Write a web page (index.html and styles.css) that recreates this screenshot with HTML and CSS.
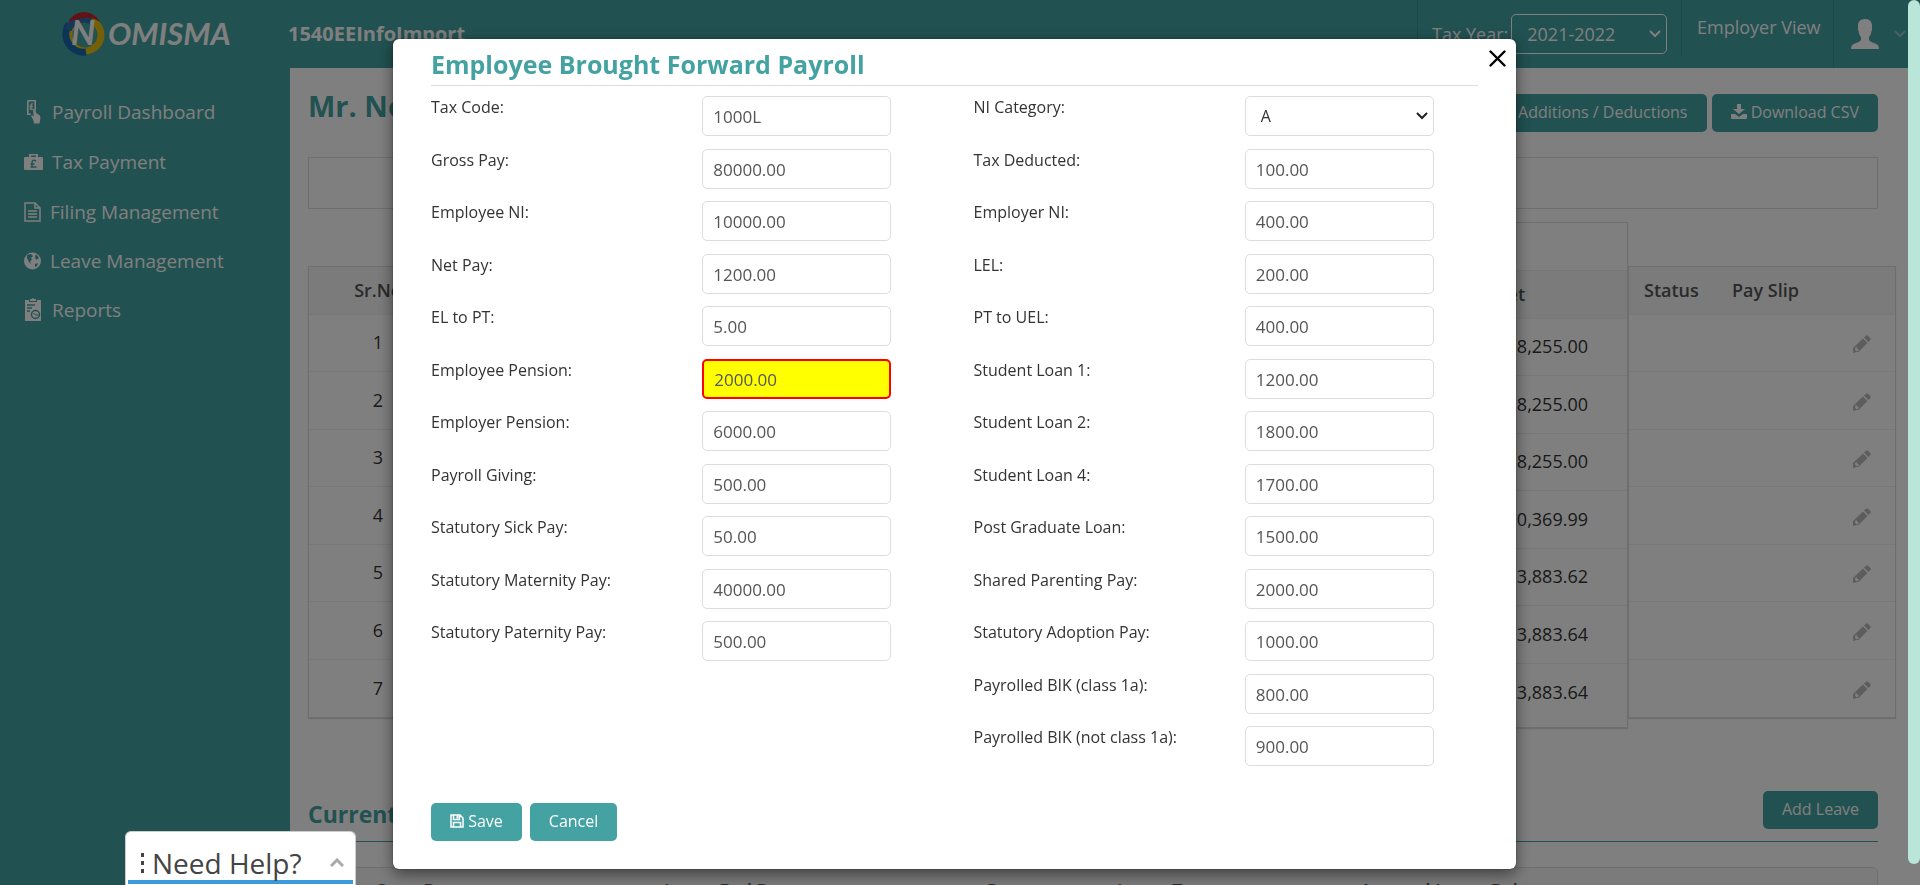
FILE: index.html
```html
<!DOCTYPE html>
<html lang="en">
<head>
<meta charset="utf-8">
<title>Employee Brought Forward Payroll</title>
<link rel="stylesheet" href="styles.css">
</head>
<body>
<svg class="sprite" aria-hidden="true">
  <symbol id="pencil" viewBox="0 0 18 18"><path d="M10 3.500l4.500 4.500L6 16.500 0 18v-5z"/><path d="M11 2.500L13 .7q1-.9 2 0l2.300 2.300q.9 1 0 2L15.500 7z"/><path class="cut" d="M2.200 12.800l1.200-.8 1 1.800 1.600.8-1 1.200-1.500.4-1.500-1.600z"/></symbol>
</svg>
<div class="page">
  <header class="topbar">
    <a class="brand" href="#" aria-label="Nomisma">
      <svg width="180" height="50" viewBox="0 0 180 50">
        <circle cx="23" cy="27" r="16" fill="none" stroke="#e6c010" stroke-width="7"/>
        <path d="M24 44A18 18 0 0 1 7 16" fill="none" stroke="#1a66ac" stroke-width="7"/>
        <path d="M6 22A17 17 0 0 1 29 13" fill="none" stroke="#2f6fae" stroke-width="7"/>
        <path d="M6 14Q12 4 22 4T38 14Q30 9 22 10T6 14z" fill="#c5262c"/>
        <text class="logo-n" x="9" y="37">N</text>
        <text class="logo-rest" x="46" y="37">OMISMA</text>
      </svg>
    </a>
    <strong class="company">1540EEInfoImport</strong>
    <div class="tax-year">
      <label for="year">Tax Year:</label>
      <select id="year"><option>2021-2022</option></select>
    </div>
    <a class="view-link" href="#">Employer View</a>
    <button class="profile" type="button" aria-label="Profile">
      <svg width="28" height="30" viewBox="0 0 28 30"><path fill="#fff" d="M14 0c5 0 7 3 7 7 0 3 .3 4-.5 5-.4 3-1.500 5-2.500 6v3c2 3 8 3 9.500 6l.5 3H0l.5-3C2 24 8 24 10 21v-3c-1-1-2.100-3-2.500-6-.8-1-.5-2-.5-5 0-4 2-7 7-7z"/></svg>
      <svg width="12" height="8" viewBox="0 0 12 8"><path d="M1 1l5 5 5-5" fill="none" stroke="#8fc4c4" stroke-width="2"/></svg>
    </button>
  </header>
  <div class="columns">
    <nav class="sidebar">
      <ul>
        <li><a href="#"><svg width="20" height="24" viewBox="0 0 20 24"><path d="M3.800.8h7.400v10M3.800.8v13.400h3" fill="none" stroke="#fff" stroke-width="1.600"/><path fill="#fff" d="M9 9.500q1.200-1 2 .5l1.200 3 3.800 2.500.5 3-1 5H10l-.5-3L7 16l1-.8 1.800 1z"/><path d="M9 4q-2-.8-2 1.500V9M5.500 6.500h3.300M5.500 9.200h3.500" fill="none" stroke="#fff" stroke-width="1.300"/></svg>Payroll Dashboard</a></li>
        <li><a href="#"><svg width="20" height="18" viewBox="0 0 20 18"><path fill="#fff" fill-rule="evenodd" d="M5 4V1h9v3h4q1 0 1 1v11q0 1-1 1H1q-1 0-1-1V5q0-1 1-1zM7 4h5V2.500H7z"/><path d="M12 8q-4-2-4 1.500V14M6.500 11h4M6.500 14h6" fill="none" stroke="#44a2a2" stroke-width="1.500"/></svg>Tax Payment</a></li>
        <li><a href="#"><svg width="18" height="20" viewBox="0 0 18 20"><path fill="none" stroke="#fff" stroke-width="1.500" d="M1 1h10l5 5v13H1zM11 1v5h5M4 9h9M4 12h9M4 15h9"/></svg>Filing Management</a></li>
        <li><a href="#"><svg width="18" height="18" viewBox="0 0 18 18"><circle cx="8.500" cy="9" r="8.500" fill="#fff"/><path fill="#44a2a2" d="M3 3l4-1 2 2-2 2 1 2-2 1 1 3-2-2-2-4zM12 2l3 4-3 2-1-3zM11 12l3-1-1 3-2 1z"/></svg>Leave Management</a></li>
        <li><a href="#"><svg width="20" height="24" viewBox="0 0 20 24"><path fill="#fff" d="M1 2h4v2h8V2h4v21H1zM6 3V1h2q1-2 2 0h2v2z"/><path d="M3 7h8M3 10h5M3 13h3" stroke="#44a2a2" stroke-width="1.500"/><circle cx="11.500" cy="16.500" r="4" fill="#fff" stroke="#44a2a2" stroke-width="1.500"/><path d="M9.500 15l2 2h3" fill="none" stroke="#44a2a2"/></svg>Reports</a></li>
      </ul>
    </nav>
    <main class="main">
      <div class="title-row">
        <h1>Mr. No</h1>
        <button class="btn" type="button">Additions / Deductions</button>
        <button class="btn" type="button"><svg width="16" height="15" viewBox="0 0 16 15"><path fill="#fff" d="M6 0h4v5h4L8 10 2 5h4zM0 10h4l4 3 4-3h4v4q0 1-1 1H1q-1 0-1-1z"/></svg> Download CSV</button>
      </div>
      <div class="panel"></div>
      <div class="tables">
        <table class="grid serial">
          <thead><tr><th>Sr.No</th></tr></thead>
          <tbody><tr><td>1</td></tr><tr><td>2</td></tr><tr><td>3</td></tr><tr><td>4</td></tr><tr><td>5</td></tr><tr><td>6</td></tr><tr><td>7</td></tr></tbody>
        </table>
        <table class="grid amounts">
          <thead><tr class="group"><td></td></tr><tr><th>Net</th></tr></thead>
          <tbody><tr><td>8,255.00</td></tr><tr><td>8,255.00</td></tr><tr><td>8,255.00</td></tr><tr><td>0,369.99</td></tr><tr><td>3,883.62</td></tr><tr><td>3,883.64</td></tr><tr><td>3,883.64</td></tr></tbody>
        </table>
        <table class="grid status">
          <thead><tr><th class="c-status">Status</th><th class="c-slip">Pay Slip</th><th></th></tr></thead>
          <tbody>
            <tr><td></td><td></td><td><svg class="pencil"><use href="#pencil"/></svg></td></tr>
            <tr><td></td><td></td><td><svg class="pencil"><use href="#pencil"/></svg></td></tr>
            <tr><td></td><td></td><td><svg class="pencil"><use href="#pencil"/></svg></td></tr>
            <tr><td></td><td></td><td><svg class="pencil"><use href="#pencil"/></svg></td></tr>
            <tr><td></td><td></td><td><svg class="pencil"><use href="#pencil"/></svg></td></tr>
            <tr><td></td><td></td><td><svg class="pencil"><use href="#pencil"/></svg></td></tr>
            <tr><td></td><td></td><td><svg class="pencil"><use href="#pencil"/></svg></td></tr>
          </tbody>
        </table>
      </div>
      <section class="leave">
        <div class="leave-head"><h2>Current</h2><button class="btn" type="button">Add Leave</button></div>
        <table class="leave-table">
          <tr><th class="w-start">Leave Start Date</th><th class="w-end">Leave End Date</th><th class="w-reason">Reason</th><th class="w-type">Leave Type</th><th>Accrued Leave Balance</th></tr>
        </table>
      </section>
    </main>
  </div>
</div>

<div class="backdrop">
  <form class="modal" role="dialog" aria-labelledby="dlg">
    <button class="close" type="button" aria-label="Close"><svg width="17" height="17" viewBox="0 0 17 17"><path d="M1.500 1.500l14 14M15.500 1.500l-14 14" stroke="#000" stroke-width="2.400" stroke-linecap="round"/></svg></button>
    <h2 class="modal-title" id="dlg">Employee Brought Forward Payroll</h2>
    <div class="fields">
      <div class="col">
        <div class="field"><label for="f1">Tax Code:</label><input id="f1" value="1000L"></div>
        <div class="field"><label for="f2">Gross Pay:</label><input id="f2" value="80000.00"></div>
        <div class="field"><label for="f3">Employee NI:</label><input id="f3" value="10000.00"></div>
        <div class="field"><label for="f4">Net Pay:</label><input id="f4" value="1200.00"></div>
        <div class="field"><label for="f5">EL to PT:</label><input id="f5" value="5.00"></div>
        <div class="field"><label for="f6">Employee Pension:</label><input id="f6" class="flagged" value="2000.00"></div>
        <div class="field"><label for="f7">Employer Pension:</label><input id="f7" value="6000.00"></div>
        <div class="field"><label for="f8">Payroll Giving:</label><input id="f8" value="500.00"></div>
        <div class="field"><label for="f9">Statutory Sick Pay:</label><input id="f9" value="50.00"></div>
        <div class="field"><label for="f10">Statutory Maternity Pay:</label><input id="f10" value="40000.00"></div>
        <div class="field"><label for="f11">Statutory Paternity Pay:</label><input id="f11" value="500.00"></div>
      </div>
      <div class="col">
        <div class="field"><label for="g1">NI Category:</label><select id="g1"><option>A</option></select></div>
        <div class="field"><label for="g2">Tax Deducted:</label><input id="g2" value="100.00"></div>
        <div class="field"><label for="g3">Employer NI:</label><input id="g3" value="400.00"></div>
        <div class="field"><label for="g4">LEL:</label><input id="g4" value="200.00"></div>
        <div class="field"><label for="g5">PT to UEL:</label><input id="g5" value="400.00"></div>
        <div class="field"><label for="g6">Student Loan 1:</label><input id="g6" value="1200.00"></div>
        <div class="field"><label for="g7">Student Loan 2:</label><input id="g7" value="1800.00"></div>
        <div class="field"><label for="g8">Student Loan 4:</label><input id="g8" value="1700.00"></div>
        <div class="field"><label for="g9">Post Graduate Loan:</label><input id="g9" value="1500.00"></div>
        <div class="field"><label for="g10">Shared Parenting Pay:</label><input id="g10" value="2000.00"></div>
        <div class="field"><label for="g11">Statutory Adoption Pay:</label><input id="g11" value="1000.00"></div>
        <div class="field"><label for="g12">Payrolled BIK (class 1a):</label><input id="g12" value="800.00"></div>
        <div class="field"><label for="g13">Payrolled BIK (not class 1a):</label><input id="g13" value="900.00"></div>
      </div>
    </div>
    <div class="actions">
      <button class="btn" type="button"><svg width="14" height="14" viewBox="0 0 14 14"><path fill="none" stroke="#fff" stroke-width="1.500" d="M1 1h9l3 3v9H1zM3.500 13V8.500h7V13M3.500 1v4.500h6V1"/><path d="M6.500 1.500h2v3h-2z" fill="#fff"/></svg> Save</button>
      <button class="btn" type="button">Cancel</button>
    </div>
  </form>
</div>

<button class="help" type="button">
  <span class="help-row"><svg width="4" height="20" viewBox="0 0 4 20"><path fill="#444" d="M0 0h3v4H0zM0 8h3v4H0zM0 16h3v4H0z"/></svg><span class="help-text">Need Help?</span><svg width="14" height="9" viewBox="0 0 14 9"><path d="M1 8l6-6 6 6" fill="none" stroke="#aaa" stroke-width="3"/></svg></span>
</button>
<div class="scroll-thumb"></div>
</body>
</html>
```

FILE: styles.css
```css
* { box-sizing: border-box; }
body { margin: 0; height: 100vh; overflow: hidden; font-family: "Open Sans", "Noto Sans", sans-serif; font-size: 16px; color: #333; background: #fff; }
h1, h2, ul { margin: 0; padding: 0; }
a { color: inherit; text-decoration: none; }
button, input, select { font-family: inherit; }
.sprite { display: none; }
.page { height: 100vh; overflow: hidden; display: flex; flex-direction: column; }

.topbar { flex: none; display: flex; height: 68px; padding-right: 12px; background: #44a2a2; color: #fff; }
.brand { width: 288px; padding: 8px 0 0 62px; }
.logo-n { font: italic 700 34px Lato, sans-serif; fill: #fff; }
.logo-rest { font: italic 700 31px Lato, sans-serif; fill: #fff; }
.company { flex: 1; font-size: 20px; line-height: 68px; }
.tax-year { display: flex; align-items: center; gap: 3px; width: 264px; padding-left: 14px; border-left: 1px solid #3a9090; font-size: 18px; }
.tax-year select { width: 156px; height: 40px; padding: 0 0 0 15px; border: 1px solid #fff; border-radius: 5px; background-color: transparent; color: #fff; font-size: 18px; }
select { appearance: none; background-repeat: no-repeat; background-position: right 5px center; }
.tax-year select { background-image: url("data:image/svg+xml,%3Csvg xmlns='http://www.w3.org/2000/svg' width='12' height='8'%3E%3Cpath d='M1 1l5 5 5-5' fill='none' stroke='white' stroke-width='2'/%3E%3C/svg%3E"); }
.view-link { width: 152px; height: 56px; padding-left: 15px; border-left: 1px solid #3a9090; font-size: 18px; line-height: 54px; }
.profile { display: flex; align-items: center; gap: 15px; width: 75px; padding: 0 0 0 17px; border: 0; border-left: 1px solid #3a9090; background: none; }

.columns { flex: 1; display: grid; grid-template-columns: 290px 1fr; min-height: 0; }
.sidebar { background: #44a2a2; color: #fff; padding-top: 19px; }
.sidebar ul { list-style: none; }
.sidebar a { display: flex; align-items: center; gap: 8px; height: 50px; padding-left: 24px; font-size: 19px; }
.sidebar li:nth-child(n+3) a { height: 49px; }
.main { padding: 26px 24px 0 18px; min-width: 0; overflow: hidden; }
.title-row { display: flex; gap: 5px; margin-right: 18px; }
.title-row h1 { flex: 1; color: #44a2a2; font-size: 29px; line-height: 24px; }
.btn { height: 38px; padding: 0 19px 2px; border: 0; border-radius: 5px; background: #44a2a2; color: #fff; font-size: 16px; white-space: nowrap; }
.btn svg { vertical-align: -1px; }
.panel { height: 52px; margin: 25px 18px 13px 0; border: 1px solid #ddd; }

.tables { display: flex; align-items: flex-start; }
.grid { border-collapse: separate; border-spacing: 0; border: 1px solid #ddd; box-shadow: 0 1px 1px #ddd; font-size: 18px; }
.grid th, .grid td { padding: 0 0 2px; border-bottom: 1px solid #eee; }
.grid th { height: 48px; background: #f6f6f6; color: #555; font-weight: 600; text-align: left; }
.grid tbody td { height: 57px; }
.grid tbody tr:nth-child(even) td { height: 58px; }
.grid tbody tr:last-child td { border-bottom: 0; }
.serial { width: 140px; margin-top: 44px; }
.serial th, .serial td { text-align: center; }
.amounts { flex: 1; }
.amounts .group td { height: 48px; }
.amounts th { padding-right: 102px; text-align: right; }
.amounts tbody td { padding-right: 39px; text-align: right; }
.amounts tbody tr:last-child td { height: 63px; padding-bottom: 7px; }
.status { width: 268px; margin-top: 44px; table-layout: fixed; }
.status th:first-child { padding-left: 15px; }
.c-status { width: 103px; }
.c-slip { width: 90px; }
.status td:last-child { padding-right: 24px; text-align: right; }
.pencil { width: 18px; height: 18px; fill: #bbb; vertical-align: middle; }
.cut { fill: #fff; }

.leave { margin: 63px 18px 0 0; }
.leave-head { display: flex; align-items: flex-end; justify-content: space-between; padding-bottom: 12px; border-bottom: 1px solid #44a2a2; }
.leave-head h2 { color: #44a2a2; font-size: 23px; line-height: 30px; }
.leave-table { width: 100%; margin-top: 25px; table-layout: fixed; border: 1px solid #ddd; border-radius: 5px; border-spacing: 0; background: #f6f6f6; font-size: 18px; color: #555; }
.leave-table th { padding: 10px 0 10px 12px; font-weight: 600; text-align: left; }
.w-start { width: 343px; }
.w-end { width: 323px; }
.w-reason { width: 130px; }
.w-type { width: 243px; }

.backdrop { position: fixed; inset: 0; padding: 39px 404px 0 393px; background: rgba(0, 0, 0, .5); }
.modal { position: relative; padding: 8px 0 28px 38px; border-radius: 6px; background: #fff; box-shadow: 0 5px 15px rgba(0, 0, 0, .5), 0 0 1px #000; }
.modal-title { margin: 0 38px 10px 0; padding-bottom: 4px; border-bottom: 1px solid #ddd; color: #44a2a2; font-size: 25px; line-height: 34px; }
.close { position: absolute; top: 11px; right: 10px; padding: 0; border: 0; background: none; }
.close svg { display: block; }
.fields { display: grid; grid-template-columns: 1fr 1fr; }
.field { display: grid; grid-template-columns: 1fr 1fr; align-items: start; height: 53px; }
.field:nth-child(even) { height: 52px; }
.field label { line-height: 22px; }
.field input, .field select { width: 189px; height: 40px; padding: 0 10px; border: 1px solid #ddd; border-radius: 5px; background-color: #fff; color: #555; font-size: 17px; }
.field select { padding: 0 0 0 15px; color: #333; font-size: 16px; background-image: url("data:image/svg+xml,%3Csvg xmlns='http://www.w3.org/2000/svg' width='12' height='8'%3E%3Cpath d='M1 1l5 5 5-5' fill='none' stroke='%23222' stroke-width='2'/%3E%3C/svg%3E"); }
.field .flagged { border: 2px solid #f00; background: #ff0; }
.actions { display: flex; gap: 8px; margin-top: 24px; }

.help { position: fixed; left: 125px; bottom: 0; width: 231px; height: 54px; padding: 13px 2px 1px; border: 1px solid #ccc; border-bottom: 0; border-radius: 6px 6px 0 0; background: #fff; color: #444; }
.help-row { display: flex; align-items: center; height: 39px; padding: 0 9px 0 13px; border-bottom: 4px solid #3a9bdc; }
.help-text { flex: 1; margin-left: 7px; text-align: left; font-size: 28px; line-height: 34px; }
.scroll-thumb { position: fixed; top: 0; right: 0; bottom: 21px; width: 12px; border-radius: 6px; background: #bae5d9; }
```
